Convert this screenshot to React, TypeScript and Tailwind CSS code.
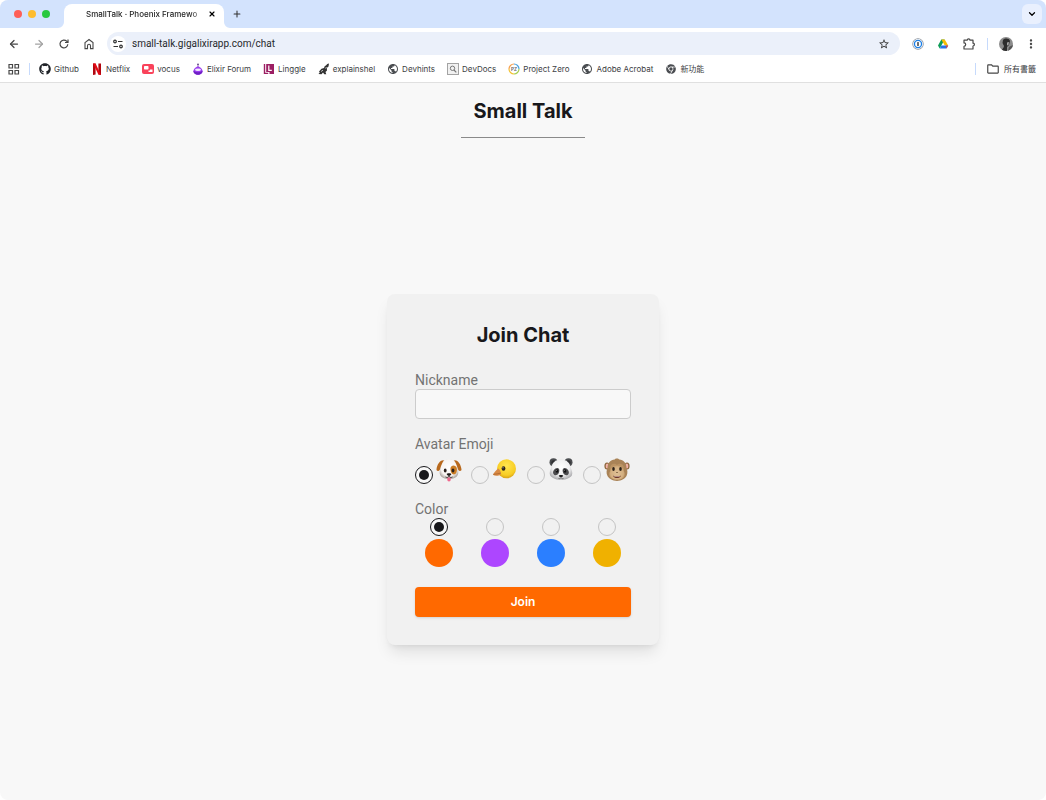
import { useState } from "react";
import type { ReactNode } from "react";
import { FaChrome, FaGithub } from "react-icons/fa";
import {
  MdOutlineFolder,
  MdMoreVert,
  MdPublic,
  MdStarBorder,
} from "react-icons/md";
import { ArrowLeft, ArrowRight, ChevronDown, Plus, X } from "lucide-react";

const NetflixIcon = () => (
  <svg viewBox="0 0 12 12" className="size-3">
    <path d="M2 .5h2.600v11L2 12zM7.400 .5H10V12l-2.600-.5z" fill="#b1060f" />
    <path d="M2 .5h2.600L10 12l-2.600-.5z" fill="#e50914" />
  </svg>
);

const VocusIcon = () => (
  <svg viewBox="0 0 12 12" className="size-3">
    <rect y="1" width="12" height="10" rx="2" fill="#f9425a" />
    <rect x="2" y="3" width="4.500" height="3.500" rx=".7" fill="#fff" />
    <path d="M8 6.500h2.500V9H6.500V7.500H8z" fill="#fff" />
  </svg>
);

const ElixirIcon = () => (
  <svg viewBox="0 0 12 12" className="size-3">
    <path d="M5.500 1h1v3h-1z" fill="#8a6aa8" />
    <path d="M6 3.500c2 0 4.500 2.500 4.500 4.800S8.500 11.800 6 11.800s-4.500-1.200-4.500-3.500S4 3.500 6 3.500z" fill="#9a3df0" />
    <ellipse cx="6" cy="6.800" rx="3" ry="1.300" fill="#f3e9fd" />
    <path d="M1.600 7.600c.6 1 2.300 1.600 4.400 1.600s3.800-.6 4.400-1.600c.5 2.700-1.700 4.200-4.400 4.200S1.100 10.300 1.600 7.600z" fill="#6f1fc4" />
    <circle cx="6" cy="1.300" r=".8" fill="#4c2a6e" />
  </svg>
);

const LinggleIcon = () => (
  <svg viewBox="0 0 12 12" className="size-3">
    <path d="M.8 1h1.400v8.800h3V11H.8z" fill="#9c1f63" />
    <path d="M3.200 1H11v10H6.500V9H3.200z" fill="#9c1f63" />
    <path d="M5.800 2.500v4.800h3" stroke="#fff" strokeWidth="1.200" fill="none" />
  </svg>
);

const ExplainIcon = () => (
  <svg viewBox="0 0 12 12" className="size-3">
    <path
      d="M11 .5 9.200 1 8 2.500 6.800 3 6 5 3.500 5.800 1 8.500l.8 1L.5 11l3 .3L5 9.500l1.300 1.700h2L7.500 9 9 7.500 8.800 5l1.700-1.500z"
      fill="#333"
    />
    <path d="m3 8.500 2-1.300M7.500 5.500l1-1.500" stroke="#ddd" strokeWidth=".8" />
  </svg>
);

const DevDocsIcon = () => (
  <svg viewBox="0 0 12 12" className="size-3">
    <rect x=".5" y=".5" width="11" height="11" fill="#f1f1f1" stroke="#a3a3a3" />
    <circle cx="5.500" cy="5.300" r="2.200" fill="none" stroke="#777" />
    <path d="m7 7 2.300 2.300" stroke="#777" strokeWidth="1.200" />
  </svg>
);

const ProjectZeroIcon = () => (
  <svg viewBox="0 0 12 12" className="size-3">
    <g fill="none" strokeWidth="1.200">
      <path d="M1 6a5 5 0 0 1 5-5" stroke="#f6a04d" />
      <path d="M6 1a5 5 0 0 1 5 5" stroke="#4aa3e0" />
      <path d="M11 6a5 5 0 0 1-5 5" stroke="#a6cf4f" />
      <path d="M6 11a5 5 0 0 1-5-5" stroke="#f2c230" />
    </g>
    <text x="6" y="7.600" fontSize="4.500" fontWeight="700" textAnchor="middle" fill="#666">
      PZ
    </text>
  </svg>
);

const ReloadIcon = () => (
  <svg viewBox="0 0 12 12" className="size-3" fill="none" stroke="#474747" strokeWidth="1.200">
    <path d="M9.800 6.300A3.900 3.900 0 1 1 8.700 3.200L10 4.400" />
    <path d="M10 1.500v3H7" />
  </svg>
);

const HomeIcon = () => (
  <svg viewBox="0 0 12 12" className="size-3" fill="none" stroke="#474747" strokeWidth="1.100">
    <path d="M2 4.600 6 1.500l4 3.100v6H7.500V7.800a1.500 1.500 0 0 0-3 0v2.800H2z" />
  </svg>
);

const SiteInfoIcon = () => (
  <svg viewBox="0 0 12 12" className="size-3" fill="none" stroke="#333" strokeWidth="1.200">
    <circle cx="3" cy="3.500" r="1.300" />
    <path d="M6 3.500h4.500M1.500 8.500H6" />
    <circle cx="9" cy="8.500" r="1.300" />
  </svg>
);

const GridIcon = () => (
  <svg viewBox="0 0 12 12" className="size-3" fill="none" stroke="#474747" strokeWidth="1.200">
    <path d="M1 1.500H4.500V5H1zM7 1.500H10.500V5H7zM1 7.500H4.500V11H1zM7 7.500H10.500V11H7z" />
  </svg>
);

const PasswordIcon = () => (
  <svg viewBox="0 0 12 12" className="size-3">
    <circle cx="6" cy="6" r="5.700" fill="#8b9199" />
    <circle cx="6" cy="6" r="4.900" fill="#fff" />
    <circle cx="6" cy="6" r="4.200" fill="#1a7fe8" />
    <circle cx="6" cy="6" r="2.900" fill="#fff" />
    <rect x="5.300" y="3.900" width="1.400" height="4.200" rx=".4" fill="#333" />
  </svg>
);

const DriveIcon = () => (
  <svg viewBox="0 0 12 12" className="size-3">
    <path d="M4.300 1.500h3.400L6 4.400 2.700 10.500 1 7.500z" fill="#0f9d58" />
    <path d="M4.300 1.500h3.400L11.200 7.500H7.800z" fill="#fbbc04" />
    <path d="M4.400 7.500h6.800l-1.700 3H2.700z" fill="#2a73e8" />
    <path d="m9 7.500 2.200 0-1.700 3z" fill="#ea4335" />
  </svg>
);

const ExtensionIcon = () => (
  <svg viewBox="0 0 14 14" className="size-3.5" fill="none" stroke="#474747" strokeWidth="1.200">
    <path
      d="M2 3.200h3.200a1.400 1.400 0 0 1 2.800 0h3v3a1.400 1.400 0 0 1 0 2.800v3H2V9.300a1.700 1.700 0 0 0 0-3.400z"
      strokeLinejoin="round"
    />
  </svg>
);

const ProfilePhoto = () => (
  <svg viewBox="0 0 14 14" className="size-3.5 rounded-full">
    <rect width="14" height="14" fill="#8c8c8c" />
    <path d="M4 3c2-2 6-2 7 1l-1 4-2 2v4H2c1-2 3-3 3-5L3.500 6z" fill="#2d2d2d" />
    <path d="M8 5.500 10 5l-.5 3-1.500.5z" fill="#a8a8a8" />
    <path d="M10 10c2-1 3-2 4-2v6H9z" fill="#555" />
  </svg>
);

const DogFace = () => (
  <svg viewBox="0 0 26 26" className="size-[26px]">
    <defs>
      <radialGradient id="dog" cx=".5" cy=".42" r=".6">
        <stop offset="0" stopColor="#ffffff" />
        <stop offset=".7" stopColor="#f7f4f1" />
        <stop offset="1" stopColor="#aaa39e" />
      </radialGradient>
    </defs>
    <path d="M13 2.500c5 0 7.800 2.500 8.600 7.500.6 4 1.600 7.500-1.100 9.700-1.800 1.600-4.500 2.300-7.500 2.300s-5.700-.7-7.500-2.300C2.800 17.500 3.800 14 4.400 10 5.200 5 8 2.500 13 2.500z" fill="url(#dog)" />
    <path d="M8 3.200C4 2.500 1 7.500.5 12.500c0 1.800 2.400 2 3.300.3C4.800 9.800 5.500 6.500 8 3.200z" fill="#b8691d" />
    <path d="M18 3.200c4-.7 7 4.300 7.500 9.300 0 1.800-2.400 2-3.300.3-1-3-1.700-6.300-4.200-9.600z" fill="#b8691d" />
    <path d="M14.500 11c.4-3.500 5.700-3.500 6.300.3.500 3.200-.6 6.200-2.900 6.200S14.200 14 14.500 11z" fill="#cb7c23" />
    <ellipse cx="9.200" cy="13.500" rx="1.400" ry="2" fill="#2a211d" />
    <ellipse cx="17" cy="13.500" rx="1.400" ry="2" fill="#2a211d" />
    <path d="M11.300 20.500h3.400v2.200a1.700 1.700 0 0 1-3.400 0z" fill="#f0688c" />
    <path d="M10.700 17c0-1 4.600-1 4.600 0 0 .9-1.300 2-2.300 2s-2.300-1.100-2.300-2z" fill="#1f1a19" />
    <path d="M9.500 20c1.300.8 2.800.6 3.500-.8.700 1.400 2.200 1.600 3.500.8" fill="none" stroke="#332b28" strokeWidth=".9" />
  </svg>
);

const BirdFace = () => (
  <svg viewBox="0 0 26 26" className="size-[26px]">
    <defs>
      <radialGradient id="bird" cx=".5" cy=".35" r=".65">
        <stop offset="0" stopColor="#ffe650" />
        <stop offset=".75" stopColor="#f8cd24" />
        <stop offset="1" stopColor="#d9a216" />
      </radialGradient>
    </defs>
    <circle cx="14.500" cy="11.800" r="9.500" fill="url(#bird)" />
    <path d="M6.200 11.500c-1.700 1.700-4.200 3.700-5.200 6.300 2 1.400 5.500 1.200 8-.6 0-2.300-1-4.500-2.800-5.700z" fill="#d98a45" />
    <path d="M1.200 17.300c2.800-.2 5-.4 7.500-1.200" stroke="#a35f28" strokeWidth=".7" fill="none" />
    <ellipse cx="11.500" cy="11.500" rx="1.900" ry="2.200" fill="#2d2418" />
    <circle cx="11" cy="10.700" r=".5" fill="#fff" />
  </svg>
);

const PandaFace = () => (
  <svg viewBox="0 0 26 26" className="size-[26px]">
    <defs>
      <radialGradient id="panda" cx=".5" cy=".4" r=".62">
        <stop offset="0" stopColor="#ffffff" />
        <stop offset=".6" stopColor="#f0f0f1" />
        <stop offset="1" stopColor="#a9a9ac" />
      </radialGradient>
    </defs>
    <circle cx="5.500" cy="5.300" r="4" fill="#4b4d50" />
    <circle cx="20.500" cy="5.300" r="4" fill="#4b4d50" />
    <circle cx="5.600" cy="5.600" r="2.300" fill="#2f3033" />
    <circle cx="20.400" cy="5.600" r="2.300" fill="#2f3033" />
    <path d="M13 2.500c6 0 9 3.500 9.800 8.500 1 2 2 5 1.200 7-1 2.500-5 4.800-11 4.800S3 20.500 2 18c-.8-2 .2-5 1.200-7C4 6 7 2.500 13 2.500z" fill="url(#panda)" />
    <path d="M5.500 17c-1.500-2.500 1.500-6.200 4-6 2.300.3 2.200 3.500 1 5.500-1.200 2-4 2.400-5 .5zM20.500 17c1.500-2.500-1.500-6.200-4-6-2.300.3-2.200 3.500-1 5.500 1.200 2 4 2.400 5 .5z" fill="#4a4a4d" />
    <ellipse cx="9" cy="14" rx="1.300" ry="1.700" fill="#0f0f10" />
    <ellipse cx="17" cy="14" rx="1.300" ry="1.700" fill="#0f0f10" />
    <circle cx="8.700" cy="13.300" r=".4" fill="#fff" />
    <circle cx="16.700" cy="13.300" r=".4" fill="#fff" />
    <path d="M10.800 18.500c0-.8 4.400-.8 4.400 0S14 20.300 13 20.300s-2.200-1-2.200-1.800z" fill="#1d1d1f" />
    <path d="M10.500 21.500c1 .3 2 .2 2.500-.8.500 1 1.500 1.100 2.500.8" stroke="#555" strokeWidth=".7" fill="none" />
  </svg>
);

const MonkeyFace = () => (
  <svg viewBox="0 0 26 26" className="size-[26px]">
    <defs>
      <radialGradient id="monkey" cx=".5" cy=".6" r=".5">
        <stop offset="0" stopColor="#dfc096" />
        <stop offset=".8" stopColor="#d3af80" />
        <stop offset="1" stopColor="#bb9363" />
      </radialGradient>
    </defs>
    <ellipse cx="3" cy="9" rx="2.600" ry="3.600" fill="#8f683f" />
    <ellipse cx="23" cy="9" rx="2.600" ry="3.600" fill="#8f683f" />
    <ellipse cx="3.200" cy="9" rx="1.500" ry="2.600" fill="#f2b3a8" />
    <ellipse cx="22.800" cy="9" rx="1.500" ry="2.600" fill="#f2b3a8" />
    <path d="M13 1.500c1.500 0 2 .7 2.300 1C19.500 3 22.500 6 22.500 11c1 2 1.300 5 .3 7.300C21.500 21.500 17.500 24 13 24s-8.500-2.500-9.800-5.700c-1-2.300-.7-5.300.3-7.300 0-5 3-8 7.200-8.500.3-.5.800-1 2.300-1z" fill="#a98357" />
    <path d="M13 8c2-2.500 6.600-1.500 6.800 2.500.1 1.500 0 2.500 0 3.500 1.800 2 1.300 5-.2 6.500-1.600 1.600-4.100 2.300-6.600 2.300s-5-.7-6.600-2.300C4.900 19 4.400 16 6.200 14c0-1-.1-2 0-3.500C6.400 6.500 11 5.500 13 8z" fill="url(#monkey)" />
    <ellipse cx="9.500" cy="12" rx="1.300" ry="1.900" fill="#2b2018" />
    <ellipse cx="16.500" cy="12" rx="1.300" ry="1.900" fill="#2b2018" />
    <path d="M12 15.500h.6M13.400 15.500h.6" stroke="#5e4027" strokeWidth="1" />
    <path d="M9 18.700c2.700.5 5.300.5 8 0-.7 1.700-2.200 2.400-4 2.400s-3.300-.7-4-2.400z" fill="#6e3527" />
    <path d="M10 18.800c2 .4 4 .4 6 0l-.4.700h-5.200z" fill="#f4ece2" />
  </svg>
);

const bookmarks: { label: string; icon: ReactNode }[] = [
  { label: "Github", icon: <FaGithub className="size-3 text-[#1f2328]" /> },
  { label: "Netflix", icon: <NetflixIcon /> },
  { label: "vocus", icon: <VocusIcon /> },
  { label: "Elixir Forum", icon: <ElixirIcon /> },
  { label: "Linggle", icon: <LinggleIcon /> },
  { label: "explainshel", icon: <ExplainIcon /> },
  { label: "Devhints", icon: <MdPublic className="size-3 text-[#4a4d51]" /> },
  { label: "DevDocs", icon: <DevDocsIcon /> },
  { label: "Project Zero", icon: <ProjectZeroIcon /> },
  { label: "Adobe Acrobat", icon: <MdPublic className="size-3 text-[#4a4d51]" /> },
  { label: "新功能", icon: <FaChrome className="size-3 p-px text-[#4a4d51]" /> },
];

const avatars = [
  { value: "dog", icon: <DogFace /> },
  { value: "bird", icon: <BirdFace /> },
  { value: "panda", icon: <PandaFace /> },
  { value: "monkey", icon: <MonkeyFace /> },
];

const colors = [
  { value: "orange", className: "bg-[#ff6900]" },
  { value: "purple", className: "bg-[#ad46ff]" },
  { value: "blue", className: "bg-[#2b7fff]" },
  { value: "yellow", className: "bg-[#f0b100]" },
];

const radioClass =
  "size-[18px] shrink-0 appearance-none rounded-full border border-[#c4c4c4] p-[3px] checked:border-[#18181b] checked:bg-[#f8f8f8] before:block before:size-full before:rounded-full checked:before:bg-[#18181b]";

const TabBar = () => (
  <div className="flex h-7 items-end bg-[#d3e3fd] pr-1">
    <div className="flex h-7 w-16 items-center gap-[6px] pl-[14px]">
      <span className="size-2 rounded-full bg-[#fe5f57]" />
      <span className="size-2 rounded-full bg-[#febc2e]" />
      <span className="size-2 rounded-full bg-[#28c840]" />
    </div>
    <div className="relative flex h-6 w-40 items-center rounded-t-lg bg-white pr-2 pb-1 pl-[22px]">
      <svg viewBox="0 0 6 6" className="absolute bottom-0 -left-1.5 size-1.5">
        <path d="M6 0v6H0a6 6 0 0 0 6-6z" fill="#fff" />
      </svg>
      <svg viewBox="0 0 6 6" className="absolute -right-1.5 bottom-0 size-1.5">
        <path d="M0 0v6h6a6 6 0 0 1-6-6z" fill="#fff" />
      </svg>
      <span className="flex-1 mask-r-from-85% text-[8px] font-medium whitespace-nowrap text-[#1f1f1f]">
        SmallTalk · Phoenix Framewo
      </span>
      <button type="button" aria-label="Close tab">
        <X className="size-2" strokeWidth={3.5} />
      </button>
    </div>
    <button type="button" aria-label="New tab" className="flex h-7 items-center pl-2">
      <Plus className="size-2.5 text-[#333]" strokeWidth={2.5} />
    </button>
    <button
      type="button"
      aria-label="Search tabs"
      className="mb-1 ml-auto flex size-5 items-center justify-center rounded-md bg-[#e9f0fe]"
    >
      <ChevronDown className="size-2.5" strokeWidth={3} />
    </button>
  </div>
);

const Toolbar = () => (
  <div className="flex h-[31px] items-center bg-white px-2">
    <div className="flex items-center gap-[13px] pr-3 text-[#474747]">
      <button type="button" aria-label="Back">
        <ArrowLeft className="size-3" strokeWidth={2.5} />
      </button>
      <button type="button" aria-label="Forward">
        <ArrowRight className="size-3 text-[#a3a3a3]" strokeWidth={2.5} />
      </button>
      <button type="button" aria-label="Reload">
        <ReloadIcon />
      </button>
      <button type="button" aria-label="Home">
        <HomeIcon />
      </button>
    </div>
    <div className="flex h-[23px] flex-1 items-center gap-1.5 rounded-full bg-[#ebf0fa] pr-2.5 pl-[3px]">
      <button
        type="button"
        aria-label="Site information"
        className="flex size-4 items-center justify-center rounded-full bg-white"
      >
        <SiteInfoIcon />
      </button>
      <input
        type="text"
        aria-label="Address"
        defaultValue="small-talk.gigalixirapp.com/chat"
        className="min-w-0 flex-1 bg-transparent font-['Roboto',sans-serif] text-[10px] leading-4 text-[#26282b] outline-none"
      />
      <button type="button" aria-label="Bookmark this page">
        <MdStarBorder className="size-3 text-[#333]" />
      </button>
    </div>
    <div className="flex items-center gap-[13px] pr-[11px] pl-3">
      <PasswordIcon />
      <DriveIcon />
      <ExtensionIcon />
    </div>
    <div className="flex items-center gap-[11px] text-[#474747]">
      <span className="h-3 w-px bg-[#c6dafc]" />
      <ProfilePhoto />
      <button type="button" aria-label="Menu">
        <MdMoreVert className="size-3.5" />
      </button>
    </div>
  </div>
);

const BookmarkBar = () => (
  <div className="flex h-6 items-center border-b border-[#e0e0e0] bg-white pr-2.5 pb-1 pl-2 text-[8px] text-[#3c4043]">
    <GridIcon />
    <span className="mx-[9px] h-3 w-px shrink-0 bg-[#c6dafc]" />
    <nav className="flex items-center gap-3">
      {bookmarks.map((bookmark) => (
        <a
          key={bookmark.label}
          href="#"
          className="flex items-center gap-[3px] whitespace-nowrap"
        >
          {bookmark.icon}
          <span>{bookmark.label}</span>
        </a>
      ))}
    </nav>
    <span className="mr-2.5 ml-auto h-3 w-px shrink-0 bg-[#c6dafc]" />
    <a href="#" className="flex items-center gap-1 whitespace-nowrap">
      <MdOutlineFolder className="size-3.5 text-[#474747]" />
      <span>所有書籤</span>
    </a>
  </div>
);

const JoinForm = () => {
  const [nickname, setNickname] = useState("");
  const [avatar, setAvatar] = useState("dog");
  const [color, setColor] = useState("orange");

  return (
    <form
      onSubmit={(e) => e.preventDefault()}
      className="w-[272px] rounded-lg bg-[#f1f1f1] p-7 font-['Roboto',sans-serif] text-sm leading-[18px] text-[#737373] shadow-lg"
    >
      <h2 className="mb-[23px] text-center font-['Inter',sans-serif] text-xl leading-[26px] font-bold text-[#18181b]">
        Join Chat
      </h2>
      <div className="mb-4">
        <label htmlFor="nickname" className="block">
          Nickname
        </label>
        <input
          id="nickname"
          type="text"
          value={nickname}
          onChange={(e) => setNickname(e.target.value)}
          className="block h-[30px] w-full rounded-sm border border-[#cccccc] bg-[#f8f8f8] px-3 text-[#18181b] outline-none"
        />
      </div>
      <fieldset className="mb-4">
        <legend>Avatar Emoji</legend>
        <div className="grid grid-cols-4 gap-2 pt-1">
          {avatars.map((item) => (
            <label key={item.value} className="flex items-end gap-[3px]">
              <input
                type="radio"
                name="avatar"
                aria-label={item.value}
                value={item.value}
                checked={avatar === item.value}
                onChange={() => setAvatar(item.value)}
                className={radioClass}
              />
              <span className="shrink-0 pb-px">{item.icon}</span>
            </label>
          ))}
        </div>
      </fieldset>
      <fieldset className="mb-5">
        <legend>Color</legend>
        <div className="grid grid-cols-4 gap-2">
          {colors.map((item) => (
            <label key={item.value} className="flex flex-col items-center gap-[3px]">
              <input
                type="radio"
                name="color"
                aria-label={item.value}
                value={item.value}
                checked={color === item.value}
                onChange={() => setColor(item.value)}
                className={radioClass}
              />
              <span className={`size-7 rounded-full ${item.className}`} />
            </label>
          ))}
        </div>
      </fieldset>
      <button
        type="submit"
        className="h-[30px] w-full rounded-sm bg-[#ff6900] font-['Inter',sans-serif] text-xs font-semibold text-white shadow-sm"
      >
        Join
      </button>
    </form>
  );
};

const App = () => {
  return (
    <div className="flex min-h-screen flex-col overflow-hidden rounded-lg bg-[#f8f8f8] font-['Inter','Noto_Sans_CJK_TC',sans-serif]">
      <header>
        <TabBar />
        <Toolbar />
        <BookmarkBar />
      </header>
      <main className="flex flex-1 flex-col items-center">
        <h1 className="border-b border-[#8a8a8a] px-3 pt-3.5 pb-3 text-xl leading-7 font-bold text-[#18181b]">
          Small Talk
        </h1>
        <div className="flex flex-1 items-center">
          <JoinForm />
        </div>
      </main>
    </div>
  );
};

export default App;
